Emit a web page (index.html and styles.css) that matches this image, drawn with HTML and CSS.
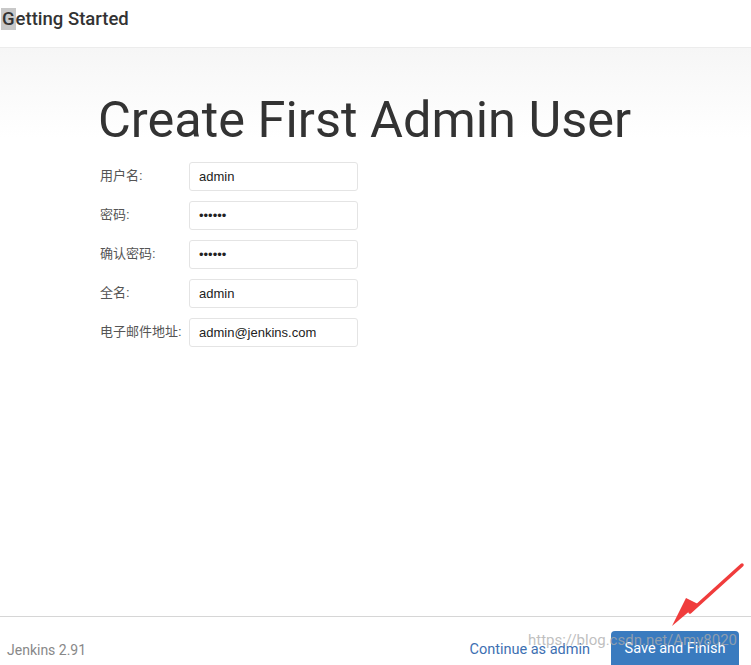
FILE: index.html
```html
<!DOCTYPE html>
<html lang="zh-CN">
<head>
  <meta charset="UTF-8" />
  <meta name="viewport" content="width=device-width, initial-scale=1" />
  <title>Getting Started</title>
  <link rel="stylesheet" href="styles.css">
</head>
<body>
  <div class="page">
    <header class="top">
      <h2><span class="sel">G</span>etting Started</h2>
    </header>

    <main class="content">
      <h1>Create First Admin User</h1>
      <form class="user-form">
        <div class="row">
          <label>用户名:</label>
          <input type="text" value="admin" />
        </div>
        <div class="row">
          <label>密码:</label>
          <input type="password" value="123456" />
        </div>
        <div class="row">
          <label>确认密码:</label>
          <input type="password" value="123456" />
        </div>
        <div class="row">
          <label>全名:</label>
          <input type="text" value="admin" />
        </div>
        <div class="row">
          <label>电子邮件地址:</label>
          <input type="text" value="admin@jenkins.com" />
        </div>
      </form>
    </main>

    <footer class="bottom">
      <span class="version">Jenkins 2.91</span>
      <div class="actions">
        <a class="link" href="#">Continue as admin</a>
        <button class="btn-save">Save and Finish</button>
      </div>
      <span class="watermark">https://blog.csdn.net/Amy8020</span>
    </footer>

    <svg class="arrow" width="90" height="80" viewBox="0 0 90 80">
      <path d="M82 5 L30 52" stroke="#f03c3c" stroke-width="3.5" stroke-linecap="round" />
      <path d="M12 66 L38 44 L26 38 Z" fill="#f03c3c" />
    </svg>
  </div>
</body>
</html>
```

FILE: styles.css
```css
* { box-sizing: border-box; }
html, body {
  margin: 0;
  height: 100%;
}
body {
  font-family: Roboto, "Liberation Sans", "Noto Sans CJK SC", sans-serif;
  color: #333;
  background: #fff;
}
.page {
  position: relative;
  height: 665px;
  display: flex;
  flex-direction: column;
  overflow: hidden;
}
.top {
  height: 48px;
  border-bottom: 1px solid #ececec;
  padding: 8px 0 0 1px;
}
.top h2 {
  margin: 0;
  font-size: 18.5px;
  font-weight: 500;
  color: #333;
  line-height: 22px;
}
.sel {
  background: #c8c8c8;
  padding: 0 1px;
}
.content {
  flex: 1;
  padding: 40px 0 0 100px;
  background: linear-gradient(#f6f6f6, #fff 90px);
}
h1 {
  margin: 0 0 10px -2px;
  font-size: 50.5px;
  font-weight: 400;
  color: #333;
  line-height: 64px;
}
.user-form {
  display: flex;
  flex-direction: column;
  gap: 10px;
}
.row {
  display: flex;
  align-items: center;
}
.row label {
  width: 89px;
  font-size: 13px;
  color: #555;
  font-family: "Liberation Sans", "Noto Sans CJK SC", sans-serif;
  padding-bottom: 4px;
}
.row input {
  width: 169px;
  height: 29px;
  border: 1px solid #e4e4e4;
  border-radius: 3px;
  padding: 0 9px;
  font-size: 13px;
  font-family: "Liberation Sans", sans-serif;
  color: #222;
  background: #fff;
}
.bottom {
  position: relative;
  height: 49px;
  border-top: 1px solid #d6d6d6;
  display: flex;
  justify-content: space-between;
  align-items: flex-start;
  padding: 14px 12px 0 7px;
}
.version {
  font-size: 14px;
  color: #888;
  margin-top: 11px;
}
.actions {
  display: flex;
  align-items: flex-start;
  gap: 21px;
}
.link {
  color: #3d70b2;
  text-decoration: none;
  font-size: 14.5px;
  margin-top: 10px;
}
.btn-save {
  background: #3a7bbf;
  color: #fff;
  border: none;
  border-radius: 4px;
  width: 128px;
  height: 40px;
  font-size: 14.5px;
  font-family: inherit;
  padding: 0 0 6px;
}
.watermark {
  position: absolute;
  left: 528px;
  top: 14px;
  font-size: 15px;
  color: rgba(170, 170, 170, 0.75);
  pointer-events: none;
}
.arrow {
  position: absolute;
  left: 660px;
  top: 560px;
}
```
